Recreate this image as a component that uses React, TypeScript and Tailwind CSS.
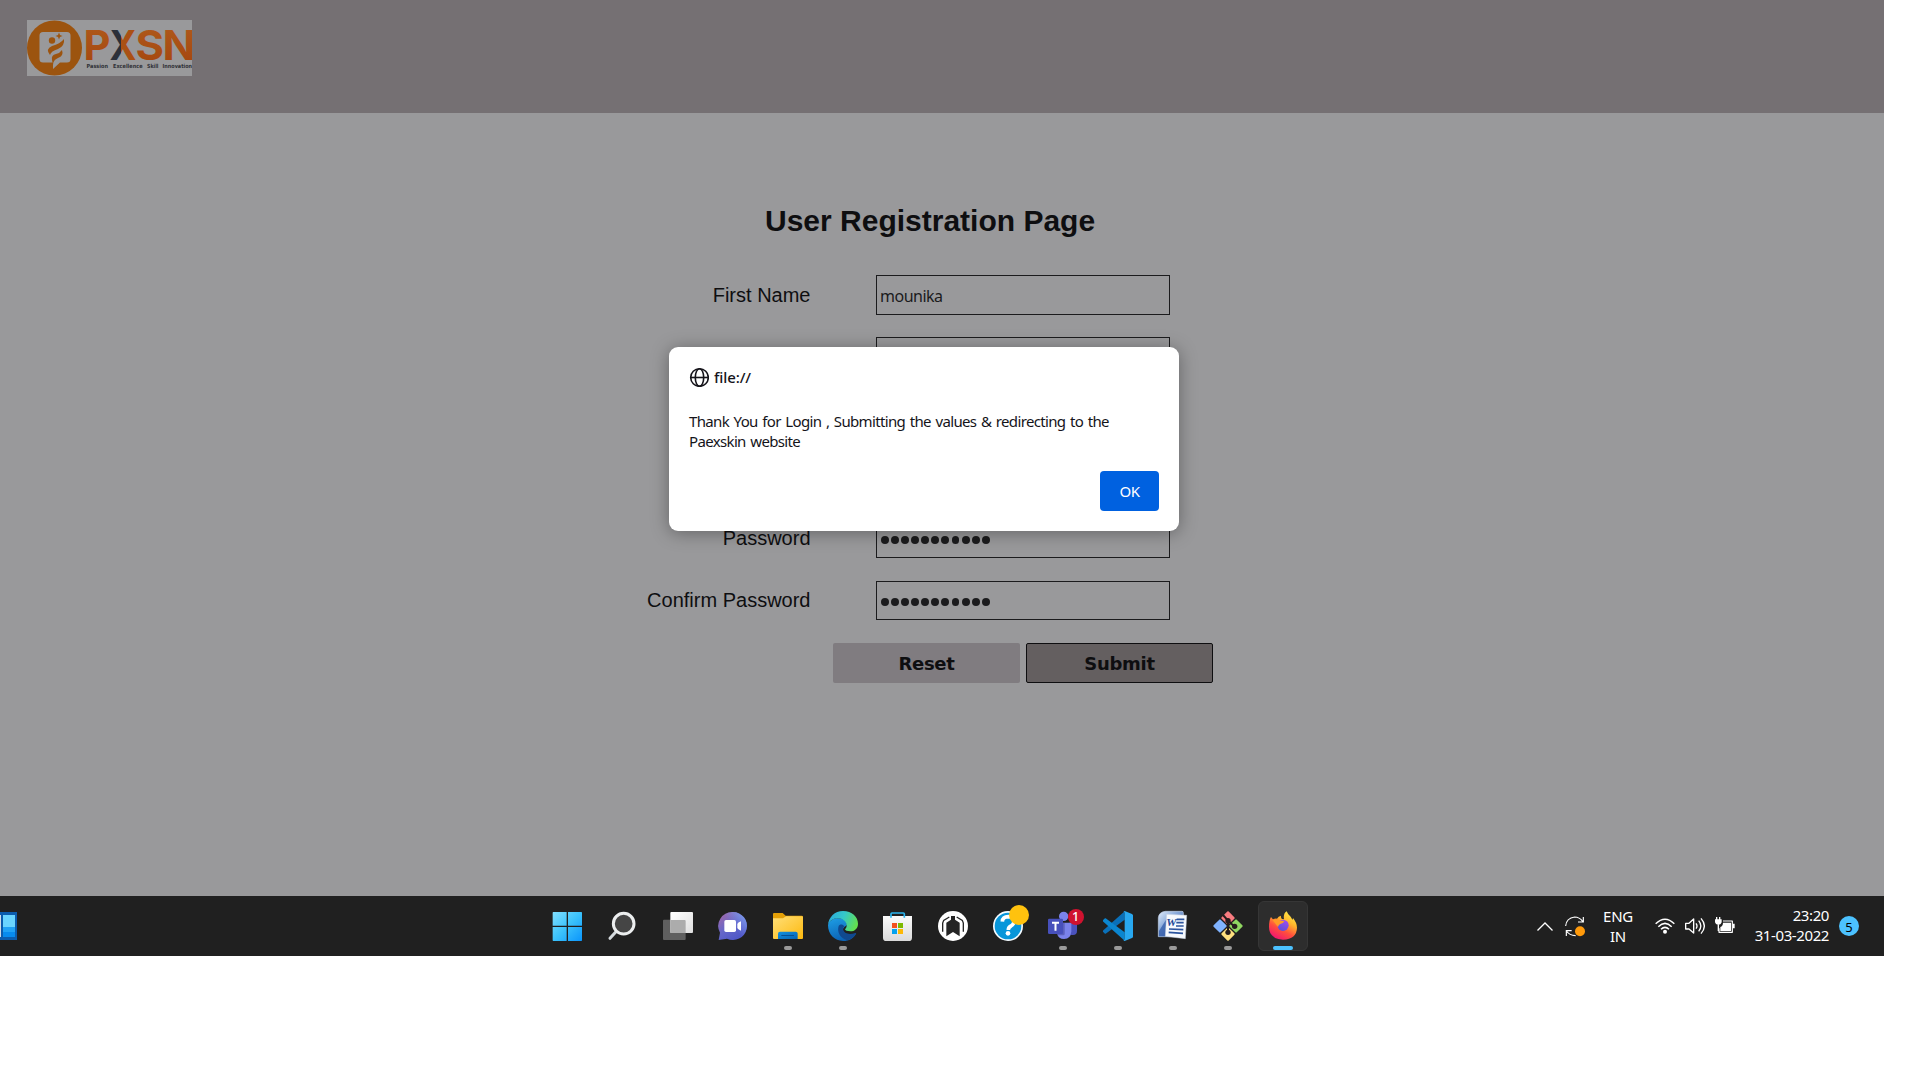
import React from "react";

const Icon = ({ children }: { children: React.ReactNode }) => (
  <svg viewBox="0 0 90 90" className="block h-[30px] w-[30px] overflow-visible">{children}</svg>
);

type App = { name: string; running?: boolean; active?: boolean; icon: React.ReactNode };

const apps: App[] = [
  {
    name: "Start",
    icon: (
      <Icon>
        <defs>
          <linearGradient id="win" x1="0" y1="0" x2="90" y2="90" gradientUnits="userSpaceOnUse">
            <stop offset="0" stopColor="#84e0ff" />
            <stop offset="0.5" stopColor="#3cc3fb" />
            <stop offset="1" stopColor="#0a94fb" />
          </linearGradient>
        </defs>
        <path transform="translate(-2)" fill="url(#win)" d="M3 3h40v41H1V5q0-2 2-2zM47 3h40q2 0 2 2v39H47zM1 48h42v42H3q-2 0-2-2zM47 48h42v40q0 2-2 2H47z" />
      </Icon>
    ),
  },
  {
    name: "Search",
    icon: (
      <Icon>
        <path d="M26 60 6 82" stroke="#d4d9dd" strokeWidth="9" strokeLinecap="round" />
        <circle cx="47" cy="38" r="31" fill="#454545" stroke="#eceeef" strokeWidth="9" />
      </Icon>
    ),
  },
  {
    name: "Task View",
    icon: (
      <Icon>
        <defs>
          <linearGradient id="tv" x1="0" y1="0" x2="1" y2="1">
            <stop offset="0" stopColor="#fff" />
            <stop offset="1" stopColor="#dedede" />
          </linearGradient>
        </defs>
        <g transform="translate(-2)">
          <rect x="2" y="26" width="68" height="61" rx="3" fill="#5f5f5f" />
          <rect x="24" y="3" width="68" height="63" rx="3" fill="url(#tv)" />
          <path fill="#acacac" d="M24 27h43q3 0 3 3v36H27q-3 0-3-3z" />
        </g>
      </Icon>
    ),
  },
  {
    name: "Chat",
    icon: (
      <Icon>
        <defs>
          <linearGradient id="chat" x1="0.1" y1="0.1" x2="0.7" y2="0.9">
            <stop offset="0" stopColor="#9b68ac" />
            <stop offset="0.5" stopColor="#6667c9" />
            <stop offset="1" stopColor="#5058c8" />
          </linearGradient>
          <linearGradient id="chat2" x1="0.5" y1="0.5" x2="1" y2="0.1">
            <stop offset="0" stopColor="#7a8fea" stopOpacity="0" />
            <stop offset="1" stopColor="#7da4ef" />
          </linearGradient>
        </defs>
        <path fill="url(#chat)" d="M45 3a42 42 0 1 1-18 80L2 87l4-22A42 42 0 0 1 45 3z" />
        <path fill="url(#chat2)" d="M45 3a42 42 0 1 1-18 80L2 87l4-22A42 42 0 0 1 45 3z" />
        <rect x="19" y="27" width="35" height="36" rx="5" fill="#fff" />
        <path fill="#fff" d="M58 39q1-4 11-8v28q-10-4-11-8z" />
      </Icon>
    ),
  },
  {
    name: "File Explorer",
    running: true,
    icon: (
      <Icon>
        <defs>
          <linearGradient id="fold" x1="0" y1="0" x2="1" y2="1">
            <stop offset="0" stopColor="#ffdf78" />
            <stop offset="1" stopColor="#fdb90e" />
          </linearGradient>
          <linearGradient id="foldb" x1="0" y1="0" x2="1" y2="1">
            <stop offset="0" stopColor="#1391df" />
            <stop offset="1" stopColor="#0663b4" />
          </linearGradient>
        </defs>
        <path fill="#e4a007" d="M0 9q0-3 3-3h26l9 8h48q4 0 4 4v30H0z" />
        <path fill="url(#fold)" d="M0 22h30l9-6h48q3 0 3 3v62q0 3-3 3H3q-3 0-3-3z" />
        <path fill="url(#foldb)" d="M15 84V68q0-6 6-6h47q6 0 6 6v16z" />
        <path d="M25 73.500h38" stroke="#064f94" strokeWidth="3" />
      </Icon>
    ),
  },
  {
    name: "Edge",
    running: true,
    icon: (
      <Icon>
        <defs>
          <linearGradient id="e1" x1="0" y1="0.2" x2="1" y2="0.5">
            <stop offset="0" stopColor="#2aa9de" />
            <stop offset="0.5" stopColor="#35c8c9" />
            <stop offset="1" stopColor="#63e04f" />
          </linearGradient>
          <linearGradient id="e2" x1="0" y1="0" x2="0.4" y2="1">
            <stop offset="0" stopColor="#1e9fe6" />
            <stop offset="1" stopColor="#0b62b4" />
          </linearGradient>
        </defs>
        <path fill="url(#e2)" d="M0 43C2 30 16 22 30 22c16 0 27 10 27 20l-8 6c-4 3-6 8-2 16 6 10 20 12 37 4-7 13-20 22-39 22C20 90 0 70 0 43z" />
        <path fill="#10498f" d="M32 45c-5 16 2 36 26 43 12-3 21-11 26-20q2-3-2-2C64 72 50 68 46 58c-2-6 0-9 3-12-6-8-14-6-17-1z" />
        <path fill="url(#e1)" d="M0 43C2 18 20 0 45 0c27 0 45 18 45 38 0 14-10 23-23 23-9 0-16-3-16-6 0-2 5-4 5-11 0-12-12-22-27-22C14 22 3 31 0 43z" />
      </Icon>
    ),
  },
  {
    name: "Microsoft Store",
    icon: (
      <Icon>
        <defs>
          <linearGradient id="bag" x1="0" y1="0" x2="0" y2="1">
            <stop offset="0" stopColor="#fbfbfb" />
            <stop offset="1" stopColor="#dadada" />
          </linearGradient>
        </defs>
        <g transform="translate(-2)">
          <path fill="url(#bag)" d="M2 15h87v65q0 10-10 10H12Q2 90 2 80z" />
          <path d="M26 20V9q0-3 3-3h34q3 0 3 3v11" fill="none" stroke="#2bb5ef" strokeWidth="5" />
          <path fill="#f3501f" d="M29 36h15v15H29z" />
          <path fill="#7db900" d="M47 36h15v15H47z" />
          <path fill="#04a2ee" d="M29 54h15v15H29z" />
          <path fill="#fdb804" d="M47 54h15v15H47z" />
        </g>
      </Icon>
    ),
  },
  {
    name: "Device Hub",
    icon: (
      <Icon>
        <circle cx="45" cy="45" r="45" fill="#fff" />
        <path d="M14 62V36l3-8 17-10M76 62V36l-3-8-17-10" fill="none" stroke="#252525" strokeWidth="4" />
        <path fill="#252525" d="M25 76V35l14-9V15h12v11l14 9v41L45 63z" />
        <path d="M33 64V36l8-5M57 64V36l-8-5" fill="none" stroke="#fff" strokeWidth="0" />
        <path d="M20 66V34l13-8M70 66V34l-13-8" fill="none" stroke="#fff" strokeWidth="3" />
      </Icon>
    ),
  },
  {
    name: "Help",
    icon: (
      <Icon>
        <circle cx="45" cy="45" r="45" fill="#f4fbff" />
        <circle cx="45" cy="45" r="40" fill="#0796da" />
        <path d="M28 32q1-15 18-15 17 1 17 14 0 9-9 14-8 4-8 12" fill="none" stroke="#fff" strokeWidth="11" />
        <circle cx="45" cy="67" r="7" fill="#fff" />
        <circle cx="78" cy="12" r="30" fill="#ffc20e" />
      </Icon>
    ),
  },
  {
    name: "Teams",
    running: true,
    icon: (
      <Icon>
        <path fill="#4a52bd" d="M64 35h23v25q0 12-12 12-11 0-11-10z" />
        <circle cx="47" cy="16" r="14" fill="#7b83eb" />
        <path fill="#7b83eb" d="M27 35h43v26q-1 23-22 23-18 0-21-18z" />
        <path fill="#3d3f91" opacity=".5" d="M30 35h20v34q0 4-4 4H29z" />
        <rect x="0" y="23" width="45" height="46" rx="4" fill="#4750bb" />
        <path d="M12 35h21M22.500 35v24" stroke="#fff" strokeWidth="6" />
        <circle cx="84" cy="18" r="24" fill="#d0122f" />
        <text x="83" y="31" textAnchor="middle" fontSize="38" fontWeight="500" fill="#fff" fontFamily="Noto Sans, sans-serif">1</text>
      </Icon>
    ),
  },
  {
    name: "Visual Studio Code",
    running: true,
    icon: (
      <Icon>
        <path fill="#0a70b9" d="M65 1v25L8 68q-2 1-4-1l-4-5q-1-2 1-4z" />
        <path fill="#0b86d0" d="M65 89V64L8 22q-2-1-4 1l-4 5q-1 2 1 4z" />
        <path fill="#28a8f0" d="M65 0 87 9q3 2 3 4v64q0 3-3 4l-22 9q-3 0-5-2 5 1 5-4V6q0-5-5-4 2-2 5-2z" />
      </Icon>
    ),
  },
  {
    name: "Word",
    running: true,
    icon: (
      <Icon>
        <defs>
          <linearGradient id="wd" x1="0" y1="0" x2="1" y2="1">
            <stop offset="0" stopColor="#e2edfb" />
            <stop offset="0.4" stopColor="#88a9da" />
            <stop offset="1" stopColor="#2b529f" />
          </linearGradient>
        </defs>
        <path fill="url(#wd)" stroke="#c3d3ec" strokeWidth="2" d="M22 1h50q4 0 4 4v72H1V20Q3 3 22 1z" />
        <path fill="#2c56a5" d="M3 60 28 20v56H3z" opacity=".7" />
        <path fill="#f6f9fd" stroke="#c8d2e2" strokeWidth="1.500" d="m26 10 60 3-4 70-60-7z" />
        <path d="M56 25h23M55 35h22M54 45h23M33 54l43 2M32 64l43 3" stroke="#2b549e" strokeWidth="5" />
        <text x="25" y="46" fontSize="34" fontWeight="700" fontStyle="italic" textLength="31" lengthAdjust="spacingAndGlyphs" fill="#1f4796" fontFamily="Liberation Serif, serif">W</text>
      </Icon>
    ),
  },
  {
    name: "Git",
    running: true,
    icon: (
      <Icon>
        <g transform="rotate(45 45 45)">
          <rect x="13" y="13" width="30" height="30" rx="3" fill="#f87c80" />
          <rect x="47" y="13" width="30" height="30" rx="3" fill="#8fd661" />
          <rect x="13" y="47" width="30" height="30" rx="3" fill="#80b3ff" />
          <rect x="47" y="47" width="30" height="30" rx="3" fill="#ffe07f" />
        </g>
        <path d="m30 12 15 17v38M45 29l20 18" stroke="#251c1c" strokeWidth="6" fill="none" />
        <circle cx="45" cy="29" r="8" fill="#251c1c" />
        <circle cx="45" cy="64" r="8" fill="#251c1c" />
        <circle cx="65" cy="46" r="8" fill="#251c1c" />
      </Icon>
    ),
  },
  {
    name: "Firefox",
    running: true,
    active: true,
    icon: (
      <Icon>
        <defs>
          <linearGradient id="ff" x1="0.8" y1="0" x2="0.25" y2="1">
            <stop offset="0" stopColor="#fff14a" />
            <stop offset="0.35" stopColor="#ffb52c" />
            <stop offset="0.65" stopColor="#ff4f3c" />
            <stop offset="1" stopColor="#ef1076" />
          </linearGradient>
          <linearGradient id="fp" x1="0.7" y1="0" x2="0.3" y2="1">
            <stop offset="0" stopColor="#a04df0" />
            <stop offset="1" stopColor="#5b4fd6" />
          </linearGradient>
        </defs>
        <path fill="url(#ff)" d="M9 18q3 4 6 7 6-3 12-2 4-7 12-9-1 7 3 10l6 1Q45 8 56 1q3 9 12 16 3 4 5 9 2-2 2-5 12 15 12 29-1 34-42 36Q4 84 3 48 3 28 9 18z" />
        <circle cx="45" cy="43" r="17" fill="url(#fp)" />
        <path fill="#ff9a26" d="M14 28q10-6 19-1 4 3 9 2 6 0 7 2-3 6-12 8-5 2-7 9-8-10-16-20z" />
      </Icon>
    ),
  },
];

function Taskbar() {
  return (
    <footer className="flex h-[60px] items-center overflow-hidden bg-[#202020] font-['Noto_Sans',sans-serif] text-white">
      <svg viewBox="0 0 17 28" className="block h-7 w-[17px]">
        <path fill="#0b5cad" d="M0 0h17v28H0z" />
        <path fill="#d2dbe6" d="M0 3h1v22H0z" />
        <path fill="#6ad5ff" d="M3 3h12v12H3z" />
        <path fill="#20a2f5" d="M3 15h12v5H3z" />
        <path fill="#078bee" d="M3 20h12v5H3z" />
      </svg>
      <nav className="ml-[526px] flex gap-[5px]">
        {apps.map((a) => (
          <div
            key={a.name}
            className={
              a.active
                ? "relative flex h-[50px] w-[50px] items-center justify-center rounded-md border border-[#363636] bg-[#2d2d2d]"
                : "relative flex h-[50px] w-[50px] items-center justify-center rounded-md border border-transparent"
            }
          >
            {a.icon}
            {a.running && (
              <span
                className={
                  a.active
                    ? "absolute bottom-0 h-1 w-5 rounded-full bg-[#4cc2ff]"
                    : "absolute bottom-0 h-1 w-2 rounded-full bg-[#9a9a9a]"
                }
              />
            )}
          </div>
        ))}
      </nav>
      <svg viewBox="0 0 16 9" className="ml-[229px] block h-[9px] w-4 fill-none stroke-white">
        <path d="m.5 8.500 7.500-7.500 7.500 7.500" strokeWidth="1.300" />
      </svg>
      <svg viewBox="0 0 60 60" className="ml-3 block h-5 w-5 overflow-visible fill-none">
        <path d="M2 30Q4 6 29 3q14 0 24 13M55 3v15H39M4 60V44h16M4 45q9 13 28 14" stroke="#fff" strokeWidth="3.500" />
        <circle cx="45" cy="46" r="15" fill="#ff9a0b" />
      </svg>
      <div className="ml-[13px] w-10 pb-px text-center text-[15px] leading-5 tracking-[-0.3px]">
        <div>ENG</div>
        <div>IN</div>
      </div>
      <svg viewBox="0 0 60 48" className="ml-[17px] block h-4 w-5 fill-none stroke-white">
        <path d="M2 17Q30-10 58 17M10 26q20-20 40 0M18 34q12-12 24 0" strokeWidth="4.500" />
        <circle cx="30" cy="41" r="6" fill="#fff" stroke="none" />
      </svg>
      <svg viewBox="0 0 60 54" className="ml-[10px] block h-[18px] w-5 fill-none stroke-white">
        <path d="M2 19h10L26 6v42L12 36H2zM33 19q6 8 0 16M41 11q13 16 0 32M48 4q20 23 0 46" strokeWidth="4" strokeLinejoin="round" />
      </svg>
      <svg viewBox="0 0 60 54" className="ml-[10px] block h-[18px] w-5 fill-none stroke-white">
        <path d="M12 34v12h40V12H24" strokeWidth="3.500" strokeLinejoin="round" />
        <path d="M16 42V30q8-3 8-13h24v25zM53 20h6v14h-6zM0 7h20v9q-2 8-10 8T0 16zM3 0h4v8H3zM12 0h4v8h-4zM8 22h4v20H8z" fill="#fff" stroke="none" />
      </svg>
      <div className="ml-[14px] w-[80px] pb-[3px] text-right text-[15px] leading-5 tracking-[-0.4px]">
        <div>23:20</div>
        <div className="whitespace-nowrap">31-03-2022</div>
      </div>
      <div className="ml-[10px] flex h-5 w-5 items-center justify-center rounded-full bg-[#4cc2ff] pt-px text-[13px] leading-5 text-black">5</div>
    </footer>
  );
}

function Logo() {
  return (
    <svg viewBox="0 0 165 56" className="block h-14 w-[165px] overflow-hidden bg-[#99999b]">
      <defs>
        <linearGradient id="or" x1="0" y1="0" x2="0" y2="1">
          <stop offset="0" stopColor="#b05c1c" />
          <stop offset="1" stopColor="#a4440e" />
        </linearGradient>
        <linearGradient id="xtone" gradientUnits="userSpaceOnUse" x1="83" y1="0" x2="109" y2="0">
          <stop offset="0.44" stopColor="#2c3039" />
          <stop offset="0.44" stopColor="#aa5014" />
        </linearGradient>
      </defs>
      <circle cx="27.500" cy="28" r="27.500" fill="#9c540f" />
      <path fill="#99999b" d="M16 12h24q3.500 0 3.500 3.500V39q0 3.500-3.500 3.500h-7L26 49v-6.500H16q-3.500 0-3.500-3.500V15.500Q12.500 12 16 12z" />
      <circle cx="25" cy="20.500" r="3.200" fill="#9c540f" />
      <path fill="#9c540f" d="M32 12.500 33 15l2.500 1-2.500 1-1 2.500-1-2.500-2.500-1 2.500-1zM37 19q1 7-6 10-7 2-8 6-5-6 2-9 8-2 12-7zM35 30q2 6-4 8-5 2-5 7l-1-5q-1-5 4-6 4-1 6-4z" />
      <g fontFamily="Inter, sans-serif" fontWeight="700" fontSize="41" fill="url(#or)">
        <text x="56.500" y="39.500" textLength="27" lengthAdjust="spacingAndGlyphs">P</text>
        <text x="82.500" y="39.500" textLength="27" lengthAdjust="spacingAndGlyphs" fill="url(#xtone)">X</text>
        <text x="108.500" y="39.500" textLength="28.500" lengthAdjust="spacingAndGlyphs">S</text>
        <text x="135.500" y="39.500" textLength="33" lengthAdjust="spacingAndGlyphs">N</text>
      </g>
      <g fontFamily="DejaVu Sans, sans-serif" fontWeight="700" fontSize="5.600" fill="#2f3036">
        <text x="59.500" y="47.500" textLength="21.500" lengthAdjust="spacingAndGlyphs">Passion</text>
        <text x="86" y="47.500" textLength="29.500" lengthAdjust="spacingAndGlyphs">Excellence</text>
        <text x="120" y="47.500" textLength="11.500" lengthAdjust="spacingAndGlyphs">Skill</text>
        <text x="135.500" y="47.500" textLength="29.500" lengthAdjust="spacingAndGlyphs">Innovation</text>
      </g>
    </svg>
  );
}

function Field({ label, children }: { label: string; children?: React.ReactNode }) {
  return (
    <div className="flex h-10 items-center">
      <div className="w-[810.5px] text-right text-[20px] leading-6 text-[#0e0e10]">{label}</div>
      <div className="ml-[65.5px] flex h-full w-[294px] items-center border border-[#1b1b1d] pl-[3px]">{children}</div>
    </div>
  );
}

function PasswordField({ label }: { label: string }) {
  return (
    <div className="flex h-[39px] items-center">
      <div className="w-[810.5px] pb-px text-right text-[20px] leading-6 text-[#0e0e10]">{label}</div>
      <div className="ml-[65.5px] flex h-full w-[294px] items-center gap-[2.2px] border border-[#1b1b1d] pl-1 pt-[3px]">
        {Array.from({ length: 11 }, (_, i) => (
          <span key={i} className="h-[7.900px] w-[7.900px] rounded-full bg-[#1b1b1d]" />
        ))}
      </div>
    </div>
  );
}

function Alert() {
  return (
    <div
      role="alertdialog"
      className="absolute left-[669px] top-[347px] flex h-[184px] w-[510px] flex-col rounded-[9px] bg-white px-5 pt-5 font-['Noto_Sans',sans-serif] text-[#15141a] shadow-[0_2px_18px_rgba(0,0,0,0.35)]"
    >
      <div className="flex h-5 items-center">
        <svg viewBox="0 0 20 20" className="block h-5 w-5 fill-none stroke-[#15141a]" strokeWidth="1.600">
          <circle cx="10.500" cy="10.500" r="8.800" />
          <ellipse cx="10.500" cy="10.500" rx="4.200" ry="8.800" />
          <path d="M1.700 10.500h17.600" />
        </svg>
        <span className="ml-[5px] text-[15px] font-medium leading-5 tracking-[-0.1px]">file://</span>
      </div>
      <p className="mt-6 whitespace-nowrap text-[15px] leading-5 tracking-[-0.65px] [word-spacing:1.3px]">
        Thank You for Login , Submitting the values &amp; redirecting to the
        <br />
        Paexskin website
      </p>
      <button className="mt-5 h-10 w-[59px] self-end rounded bg-[#0061e0] text-[15px] tracking-[-0.5px] text-white">OK</button>
    </div>
  );
}

export default function App() {
  return (
    <div className="h-[1080px] w-[1920px] overflow-hidden bg-white">
      <div className="relative w-[1884px]">
        <header className="h-[113px] bg-[#757073] pl-[27px] pt-5">
          <Logo />
        </header>
        <main className="h-[783px] bg-[#99999b] pt-[90px] font-['Liberation_Sans',Arial,sans-serif]">
          <h1 className="ml-[765px] w-[332px] whitespace-nowrap text-[30px] font-bold leading-[36px] text-[#0e0e10]">User Registration Page</h1>
          <div className="mt-9 flex flex-col gap-[22px]">
            <Field label="First Name">
              <span className="pt-[2px] font-['Noto_Sans',sans-serif] text-[16px] tracking-[-0.5px] text-[#1b1b1d]">mounika</span>
            </Field>
            <Field label="" />
          </div>
          <div className="mt-[142px] flex flex-col gap-[23px]">
            <PasswordField label="Password" />
            <PasswordField label="Confirm Password" />
          </div>
          <div className="ml-[833px] mt-[23px] flex gap-[6px] font-['DejaVu_Sans',Verdana,sans-serif] text-[18px] font-bold tracking-[-0.3px] text-[#0e0e10]">
            <button className="h-10 w-[187px] rounded-[2px] bg-[#807c80]">Reset</button>
            <button className="h-10 w-[187px] rounded-[2px] border border-[#0e0e10] bg-[#645f60]">Submit</button>
          </div>
        </main>
        <Taskbar />
        <Alert />
      </div>
    </div>
  );
}
